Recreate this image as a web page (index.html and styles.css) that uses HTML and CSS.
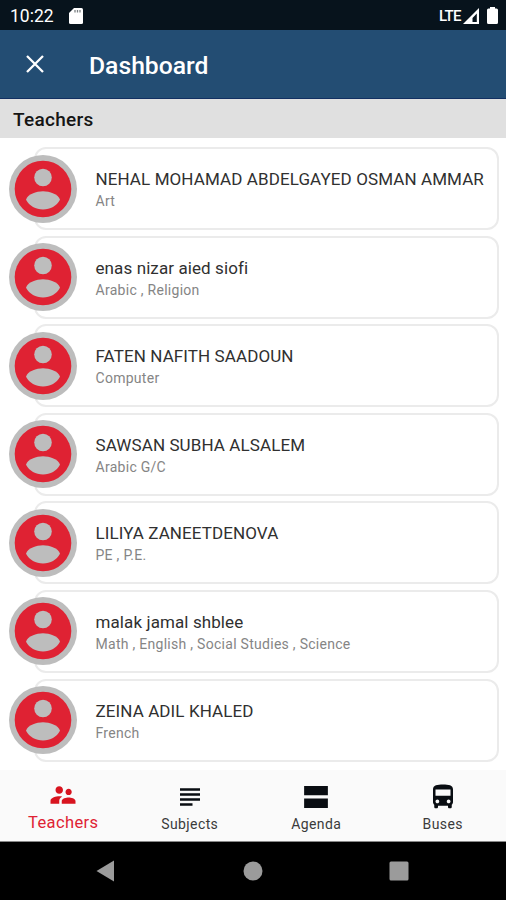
FILE: index.html
```html
<!DOCTYPE html>
<html lang="en">
<head>
    <meta charset="UTF-8">
    <meta name="viewport" content="width=device-width, initial-scale=1.0">
    <title>Dashboard</title>
    <link rel="stylesheet" href="styles.css">
</head>
<body>
    <div class="status-bar">
        <span class="clock">10:22</span>
        <svg class="sd-icon" width="14" height="16" viewBox="0 0 14 16"><path fill="#fff" d="M5 0h7.5Q14 0 14 1.5v13q0 1.500-1.500 1.500h-11Q0 16 0 14.500V5z"/><path stroke="#7b8083" stroke-width="1.300" d="M6 2v2.500M8.500 2v2.500M11 2v2.500"/></svg>
        <span class="network">LTE</span>
        <svg class="signal-icon" width="16" height="16" viewBox="0 0 16 16"><path fill="#fff" fill-rule="evenodd" d="M16 0v16H0zM13.800 5.500L9.500 10v4h4.300z"/></svg>
        <svg width="11" height="17" viewBox="0 0 11 17"><path fill="#fff" d="M3 0h5v1.500h1.500Q11 1.500 11 3v12.500q0 1.500-1.500 1.500h-8Q0 17 0 15.500V3q0-1.500 1.500-1.500H3z"/></svg>
    </div>

    <header class="app-bar">
        <svg width="18" height="18" viewBox="0 0 18 18"><path stroke="#fff" stroke-width="2.300" d="M1 1l16 16M17 1L1 17"/></svg>
        <h1>Dashboard</h1>
    </header>

    <h2 class="section-title">Teachers</h2>

    <main class="teacher-list">
        <div class="teacher">
            <svg class="avatar" viewBox="0 0 68 68"><use href="#person"/></svg>
            <div class="card">
                <div class="name">NEHAL MOHAMAD ABDELGAYED OSMAN AMMAR</div>
                <div class="subject">Art</div>
            </div>
        </div>
        <div class="teacher">
            <svg class="avatar" viewBox="0 0 68 68"><use href="#person"/></svg>
            <div class="card">
                <div class="name">enas nizar aied siofi</div>
                <div class="subject">Arabic , Religion</div>
            </div>
        </div>
        <div class="teacher">
            <svg class="avatar" viewBox="0 0 68 68"><use href="#person"/></svg>
            <div class="card">
                <div class="name">FATEN NAFITH SAADOUN</div>
                <div class="subject">Computer</div>
            </div>
        </div>
        <div class="teacher">
            <svg class="avatar" viewBox="0 0 68 68"><use href="#person"/></svg>
            <div class="card">
                <div class="name">SAWSAN SUBHA ALSALEM</div>
                <div class="subject">Arabic G/C</div>
            </div>
        </div>
        <div class="teacher">
            <svg class="avatar" viewBox="0 0 68 68"><use href="#person"/></svg>
            <div class="card">
                <div class="name">LILIYA ZANEETDENOVA</div>
                <div class="subject">PE , P.E.</div>
            </div>
        </div>
        <div class="teacher">
            <svg class="avatar" viewBox="0 0 68 68"><use href="#person"/></svg>
            <div class="card">
                <div class="name">malak jamal shblee</div>
                <div class="subject">Math , English , Social Studies , Science</div>
            </div>
        </div>
        <div class="teacher">
            <svg class="avatar" viewBox="0 0 68 68"><use href="#person"/></svg>
            <div class="card">
                <div class="name">ZEINA ADIL KHALED</div>
                <div class="subject">French</div>
            </div>
        </div>
    </main>

    <nav class="tabs">
        <div class="tab active">
            <svg width="30" height="30" viewBox="0 0 24 24"><path d="M16.500 12c1.380 0 2.490-1.120 2.490-2.500S17.880 7 16.500 7 14 8.120 14 9.500s1.120 2.500 2.500 2.500zM9 11c1.660 0 2.990-1.340 2.990-3S10.660 5 9 5 6 6.340 6 8s1.340 3 3 3zm7.500 3c-1.830 0-5.500.920-5.500 2.750V19h11v-2.250c0-1.830-3.670-2.750-5.500-2.750zM9 13c-2.330 0-7 1.170-7 3.500V19h7v-2.250c0-.850.330-2.340 2.370-3.470C10.500 13.100 9.660 13 9 13z"/></svg>
            <span>Teachers</span>
        </div>
        <div class="tab">
            <svg width="30" height="30" viewBox="0 0 24 24"><path d="M14 17H4v2h10v-2zm6-8H4v2h16V9zM4 15h16v-2H4v2zM4 5v2h16V5H4z"/></svg>
            <span>Subjects</span>
        </div>
        <div class="tab">
            <svg width="30" height="30" viewBox="0 0 24 24"><path d="M2.500 3.200h19v7.400h-19zM2.500 13.200h19v7.500h-19z"/></svg>
            <span>Agenda</span>
        </div>
        <div class="tab">
            <svg width="30" height="30" viewBox="0 0 24 24"><path d="M4 16c0 .880.390 1.670 1 2.220V20c0 .550.450 1 1 1h1c.550 0 1-.450 1-1v-1h8v1c0 .550.450 1 1 1h1c.550 0 1-.450 1-1v-1.780c.610-.550 1-1.340 1-2.220V6c0-3.500-3.580-4-8-4s-8 .500-8 4v10zm3.500 1c-.830 0-1.500-.670-1.500-1.500S6.670 14 7.500 14s1.500.670 1.500 1.500S8.330 17 7.500 17zm9 0c-.830 0-1.500-.670-1.500-1.500s.670-1.500 1.500-1.500 1.500.670 1.500 1.500-.670 1.500-1.500 1.500zm1.500-6H6V6h12v5z"/></svg>
            <span>Buses</span>
        </div>
    </nav>

    <div class="system-nav">
        <svg width="20" height="22" viewBox="0 0 20 22"><path d="M18 .500v21L.500 11z"/></svg>
        <svg width="20" height="20" viewBox="0 0 20 20"><circle cx="10" cy="10" r="9.500"/></svg>
        <svg width="20" height="20" viewBox="0 0 20 20"><rect x=".5" y=".5" width="19" height="19" rx="1.500"/></svg>
    </div>

    <!-- shared avatar -->
    <svg class="defs">
        <symbol id="person" viewBox="0 0 68 68">
            <circle cx="34" cy="34" r="34" fill="#bdbdbd"/>
            <circle cx="34" cy="34" r="28.300" fill="#df2233"/>
            <circle cx="34" cy="22.500" r="8.800" fill="#bdbdbd"/>
            <path fill="#bdbdbd" d="M17 44.800C18.500 39 27.500 36.200 34 36.200S49.500 39 51 44.800C47.500 51 41.500 54.500 34 54.500S20.500 51 17 44.800z"/>
        </symbol>
    </svg>
</body>
</html>
```
FILE: styles.css
```css
* {
    box-sizing: border-box;
}
body {
    margin: 0;
    height: 900px;
    display: flex;
    flex-direction: column;
    overflow: hidden;
    background: #fff;
    font-family: Roboto, "Liberation Sans", sans-serif;
}
svg {
    display: block;
    flex-shrink: 0;
}
.status-bar {
    height: 30px;
    padding: 1px 8px 0 10px;
    display: flex;
    align-items: center;
    background: #07131c;
    color: #fff;
}
.clock {
    width: 59px;
    font-size: 17.5px;
}
.network {
    margin-left: auto;
    font-size: 15px;
    font-weight: 500;
    letter-spacing: -0.6px;
}
.signal-icon {
    margin: 0 8px 0 2px;
}
.app-bar {
    height: 69px;
    padding: 0 26px;
    display: flex;
    align-items: center;
    gap: 45px;
    background: #234d73;
    border-bottom: 1px solid #123062;
    color: #fff;
}
.app-bar h1 {
    margin: 3px 0 0;
    font-size: 24.7px;
    font-weight: 500;
}
.section-title {
    margin: 0;
    height: 39px;
    padding-left: 13px;
    background: #e0e0e0;
    color: #151515;
    font-size: 19px;
    font-weight: 500;
    line-height: 42px;
    letter-spacing: 0.3px;
}
.teacher-list {
    height: 632px;
    padding: 9px 7px 0 9px;
    display: flex;
    flex-direction: column;
    gap: 5.6px;
}
.teacher {
    height: 83px;
    flex-shrink: 0;
    display: flex;
    align-items: center;
}
.avatar {
    width: 68px;
    height: 68px;
    position: relative;
    z-index: 1;
}
.card {
    flex: 1;
    height: 83px;
    margin-left: -43px;
    padding: 19px 0 0 59.5px;
    border: 2px solid #ebebeb;
    border-radius: 12px;
    white-space: nowrap;
}
.name {
    color: #303030;
    font-size: 17px;
    line-height: 22px;
    letter-spacing: 0.1px;
}
.subject {
    color: #858585;
    font-size: 14px;
    line-height: 23px;
    letter-spacing: 0.28px;
}
.tabs {
    height: 72px;
    display: flex;
    background: #fafafa;
    border-bottom: 1px solid #888;
}
.tab {
    flex: 1;
    padding-top: 12px;
    display: flex;
    flex-direction: column;
    align-items: center;
    color: #3a3a3a;
    fill: #090d12;
    font-size: 14px;
    line-height: 24px;
    letter-spacing: 0.4px;
}
.tab.active {
    padding-top: 10px;
    color: #df2233;
    fill: #d8141f;
    font-size: 16.5px;
    line-height: 26px;
}
.system-nav {
    height: 58px;
    padding: 0 97px 0 96px;
    display: flex;
    align-items: center;
    justify-content: space-between;
    background: #000;
    fill: #9b9b9b;
}
.defs {
    width: 0;
    height: 0;
}
```
